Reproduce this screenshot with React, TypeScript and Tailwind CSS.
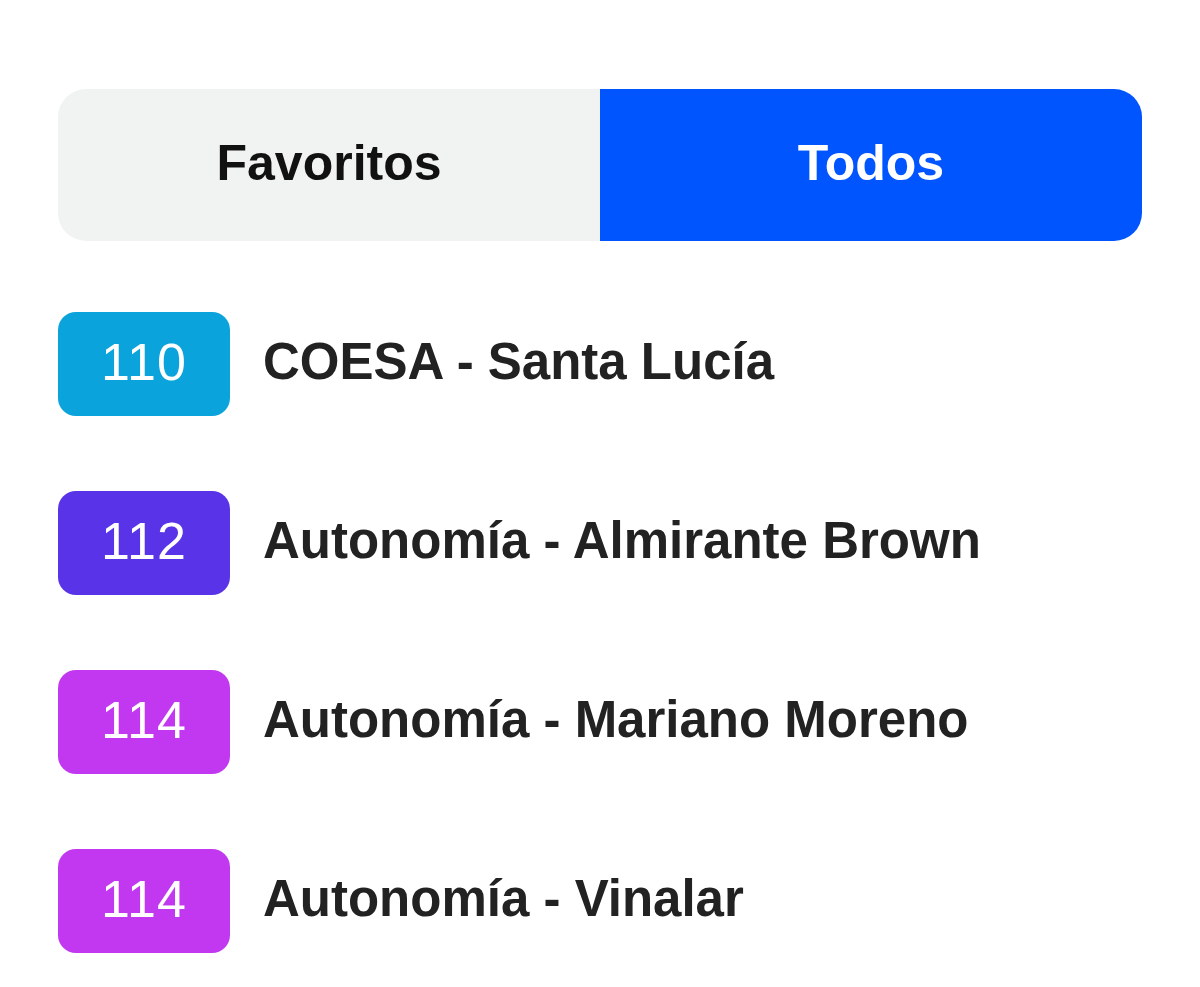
const lineas = [
  { numero: "110", nombre: "COESA - Santa Lucía", color: "bg-[#0ba3db]" },
  { numero: "112", nombre: "Autonomía - Almirante Brown", color: "bg-[#5833e8]" },
  { numero: "114", nombre: "Autonomía - Mariano Moreno", color: "bg-[#c238f0]" },
  { numero: "114", nombre: "Autonomía - Vinalar", color: "bg-[#c238f0]" },
];

export default function App() {
  return (
    <div className="min-h-[987px] bg-white px-[58px] pt-[89px] font-['Liberation_Sans',Arial,sans-serif]">
      {/* Selector */}
      <div className="flex h-[152px] overflow-hidden rounded-[28px]">
        <button className="flex flex-1 items-center justify-center bg-[#f1f3f3] pb-[4px] text-[50px] font-bold text-[#111]">
          Favoritos
        </button>
        <button className="flex flex-1 items-center justify-center bg-[#0055ff] pb-[4px] text-[50px] font-bold text-white">
          Todos
        </button>
      </div>

      {/* Lista de líneas */}
      <ul className="mt-[71px] flex flex-col gap-[75px]">
        {lineas.map((l, i) => (
          <li key={i} className="flex items-center gap-[33px]">
            <span
              className={`flex h-[104px] w-[172px] items-center justify-center rounded-[18px] pb-[4px] text-[52px] tracking-[1px] text-white ${l.color}`}
            >
              {l.numero}
            </span>
            <span className="pb-[4px] text-[51px] font-bold text-[#222]">{l.nombre}</span>
          </li>
        ))}
      </ul>
    </div>
  );
}
